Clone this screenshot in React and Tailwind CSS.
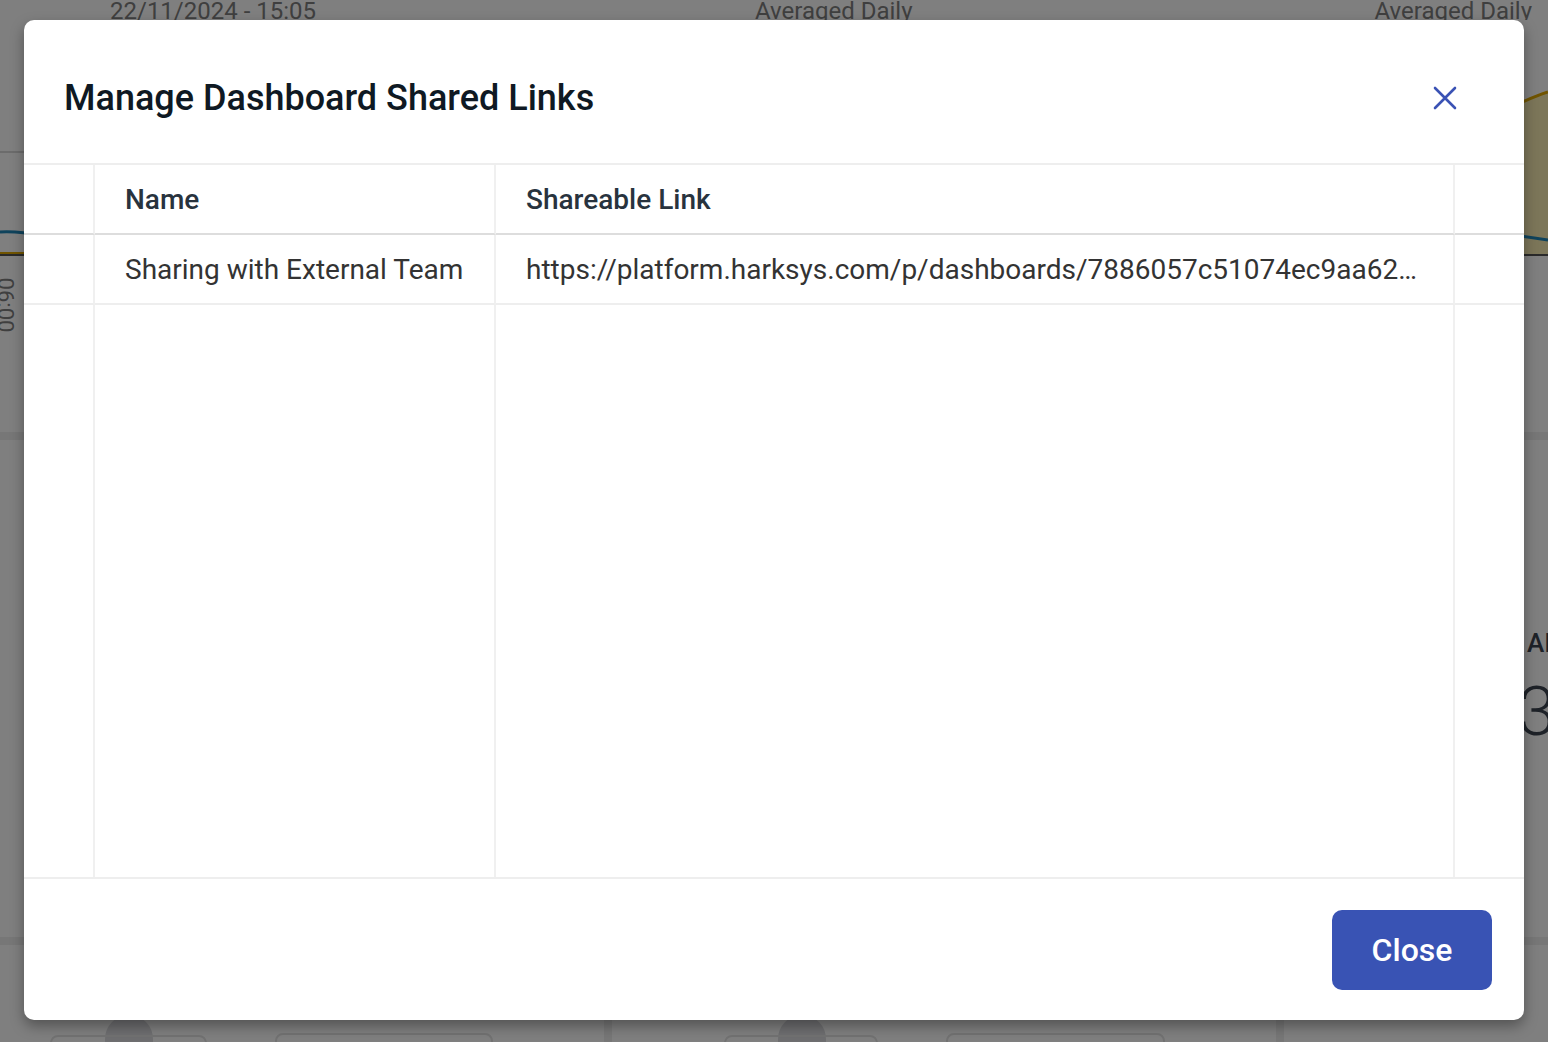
import React from 'react';

const font = { fontFamily: 'Roboto, "Noto Sans", sans-serif' };

const Dashboard = () => (
  <div className="absolute inset-0 flex flex-col bg-white text-[#7e7e7e]">
    <div className="relative h-[432px]">
      <div className="flex h-[20px] items-end overflow-hidden leading-none text-[24px]">
        <span className="ml-[110px] w-[645px] -mb-[3px]">22/11/2024 - 15:05</span>
        <span className="-mb-[3px]">Averaged Daily</span>
        <span className="ml-auto mr-[16px] -mb-[3px]">Averaged Daily</span>
      </div>
      <svg className="absolute left-0 top-0" width="1548" height="432">
        <line x1="0" y1="152" x2="40" y2="152" stroke="#d8d8d8" strokeWidth="2" />
        <path d="M1500 112 Q1530 98 1548 92 L1548 256 L1500 256 Z" fill="#f8ecb2" />
        <path d="M1500 112 Q1530 98 1548 92" stroke="#e0a800" strokeWidth="3" fill="none" />
        <path d="M0 232 Q20 231 40 236" stroke="#1e86b8" strokeWidth="3" fill="none" />
        <path d="M1500 234 Q1525 236 1548 240" stroke="#1e86b8" strokeWidth="3" fill="none" />
        <line x1="0" y1="253" x2="40" y2="253" stroke="#e0a800" strokeWidth="2" />
        <line x1="0" y1="255" x2="1548" y2="255" stroke="#555" strokeWidth="2" />
      </svg>
      <div className="absolute left-[-22px] top-[294px] rotate-90 text-[22px] leading-none">06:00</div>
    </div>
    <div className="h-[8px] bg-[#eeeeee]" />
    <div className="relative h-[497px]">
      <div className="absolute left-[1527px] top-[190px] text-[26px] font-medium leading-none text-[#3c4450]">AI</div>
      <div className="absolute left-[1518px] top-[238px] text-[68px] font-light leading-none text-[#3c4450]">3</div>
    </div>
    <div className="h-[8px] bg-[#eeeeee]" />
    <div className="flex flex-1">
      <div className="relative w-[612px] border-r-[8px] border-[#eeeeee]">
        <div className="absolute left-[105px] top-[70px] h-[40px] w-[48px] rounded-t-full bg-[#dcdde0]" />
        <div className="absolute left-[50px] top-[90px] h-[40px] w-[157px] rounded-lg border-2 border-[#e4e4e4]" />
        <div className="absolute left-[275px] top-[88px] h-[40px] w-[218px] rounded-lg border-2 border-[#e4e4e4]" />
      </div>
      <div className="relative w-[672px] border-r-[8px] border-[#eeeeee]">
        <div className="absolute left-[166px] top-[70px] h-[40px] w-[48px] rounded-t-full bg-[#dcdde0]" />
        <div className="absolute left-[112px] top-[90px] h-[40px] w-[154px] rounded-lg border-2 border-[#e4e4e4]" />
        <div className="absolute left-[334px] top-[88px] h-[40px] w-[219px] rounded-lg border-2 border-[#e4e4e4]" />
      </div>
    </div>
  </div>
);

const CloseIcon = () => (
  <svg width="24" height="24" viewBox="0 0 24 24" fill="none">
    <path d="M2 2 L22 22 M22 2 L2 22" stroke="#3a52b4" strokeWidth="2.6" strokeLinecap="round" />
  </svg>
);

const App = () => {
  const link = 'https://platform.harksys.com/p/dashboards/7886057c51074ec9aa62a1f3d9e4b5c7';
  const cell = 'border-r-2 border-[#f0f0f0]';

  return (
    <div className="relative h-[1042px] w-[1548px] overflow-hidden" style={font}>
      <Dashboard />
      <div className="absolute inset-0 bg-black/50" />
      <div className="absolute inset-0 flex items-start justify-center pt-[20px]">
        <div className="flex h-[1000px] w-[1500px] flex-col overflow-hidden rounded-[10px] bg-white shadow-[0_6px_14px_rgba(0,0,0,0.35)]">
          <div className="flex h-[145px] shrink-0 items-center justify-between border-b-2 border-[#eeeeee] pl-[40px] pr-[67px] pt-[12px]">
            <h1 className="text-[36px] font-medium text-[#0f1923]">Manage Dashboard Shared Links</h1>
            <button><CloseIcon /></button>
          </div>
          <div className="grid flex-1 grid-cols-[71px_401px_959px_1fr] grid-rows-[70px_70px_1fr]">
            <div className={`${cell} border-b-2 border-b-[#dddddd]`} />
            <div className={`${cell} flex items-center border-b-2 border-b-[#dddddd] px-[30px] pt-[2px] text-[28px] font-medium text-[#28333e]`}>Name</div>
            <div className={`${cell} flex items-center border-b-2 border-b-[#dddddd] px-[30px] pt-[2px] text-[28px] font-medium text-[#28333e]`}>Shareable Link</div>
            <div className="border-b-2 border-b-[#dddddd]" />

            <div className={`${cell} border-b-2 border-b-[#eeeeee]`} />
            <div className={`${cell} flex items-center border-b-2 border-b-[#eeeeee] px-[30px] pt-[2px] text-[28px] text-[#333333]`}>Sharing with External Team</div>
            <div className={`${cell} flex min-w-0 items-center border-b-2 border-b-[#eeeeee] px-[30px] pt-[2px] text-[28px] text-[#333333]`}>
              <span className="truncate">{link}</span>
            </div>
            <div className="border-b-2 border-b-[#eeeeee]" />

            <div className={cell} />
            <div className={cell} />
            <div className={cell} />
            <div />
          </div>
          <div className="flex h-[143px] shrink-0 items-start justify-end border-t-2 border-[#eeeeee] pr-[32px] pt-[31px]">
            <button className="h-[80px] w-[160px] rounded-[10px] bg-[#3953b4] text-[32px] font-medium text-white">Close</button>
          </div>
        </div>
      </div>
    </div>
  );
};

export default App;
